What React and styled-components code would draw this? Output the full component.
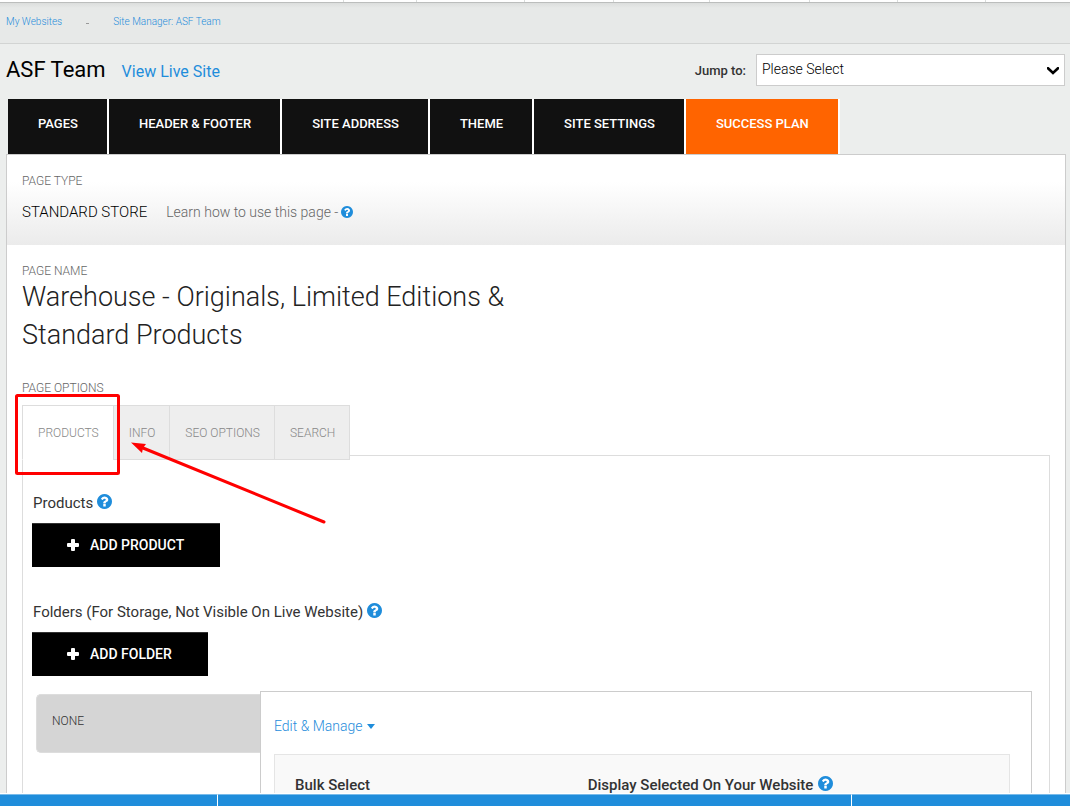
import React from "react";
import styled, { createGlobalStyle } from "styled-components";

const BLUE = "#1f8ddb";

const GlobalStyle = createGlobalStyle`
  *, *::before, *::after { box-sizing: border-box; }
  body {
    margin: 0;
    background: #eceeed;
    color: #333;
    font-family: Roboto, "Liberation Sans", sans-serif;
    font-weight: 300;
  }
  h1, h2, h3, p { margin: 0; font-weight: inherit; }
  a { text-decoration: none; color: ${BLUE}; }
  button, select { font-family: inherit; }
`;

const Shell = styled.div`
  display: flex;
  flex-direction: column;
  height: 100vh;
  overflow: hidden;
`;

const TopStrip = styled.div`
  display: flex;
  justify-content: flex-end;
  flex: none;
  height: 3px;
  background: #fff;
  border-bottom: 1px solid #bcbebd;
`;

const TopCell = styled.span`
  width: ${(p) => p.$w}px;
  border-left: 1px solid #d9dcdb;
`;

const Breadcrumb = styled.nav`
  display: flex;
  align-items: center;
  gap: 24px;
  flex: none;
  height: 41px;
  padding: 0 6px 4px;
  font-size: 10px;
  background: linear-gradient(#dcdedd, #e7e9e8 5px);
  border-bottom: 1px solid #d2d4d3;
`;

const Dot = styled.span`
  width: 3px;
  height: 1px;
  margin-top: 4px;
  background: #999;
`;

const Main = styled.main`
  display: flex;
  flex-direction: column;
  flex: 1;
  min-height: 0;
  overflow: hidden;
`;

const SiteHeader = styled.header`
  display: flex;
  align-items: center;
  flex: none;
  height: 55px;
  padding: 0 5px 4px 6px;
`;

const SiteName = styled.h1`
  font-size: 22px;
  font-weight: 400;
  line-height: 28px;
  color: #000;
`;

const LiveLink = styled.a`
  margin-left: 16px;
  padding-top: 4px;
  font-size: 16px;
  font-weight: 400;
`;

const JumpLabel = styled.label`
  margin-left: auto;
  margin-right: 10px;
  padding-top: 2px;
  font-size: 13px;
  font-weight: 500;
`;

const SelectWrap = styled.div`
  position: relative;
  width: 309px;
  svg {
    position: absolute;
    right: 6px;
    top: 13px;
    pointer-events: none;
  }
`;

const JumpSelect = styled.select`
  display: block;
  width: 100%;
  height: 32px;
  padding: 0 24px 2px 5px;
  appearance: none;
  border: 1px solid #ccc;
  border-radius: 0;
  background: #fff;
  color: #000;
  font-size: 14px;
  font-weight: 300;
`;

const MainNav = styled.nav`
  display: flex;
  flex: none;
  padding-left: 8px;
`;

const NavTab = styled.a`
  height: 55px;
  padding: 0 29px 0 30px;
  border-right: 2px solid #fff;
  background: ${(p) => (p.$accent ? "#ff6400" : "#111")};
  color: #fff;
  font-size: 13px;
  font-weight: 500;
  line-height: 50px;
`;

const Panel = styled.section`
  flex: 1;
  min-height: 0;
  overflow: hidden;
  margin: 0 4px 0 6px;
  border: 1px solid #ccc;
  border-bottom: 0;
  background: #fff;
`;

const TypeBlock = styled.div`
  height: 90px;
  padding: 19px 15px 0;
  background: linear-gradient(#fff 30%, #ebebeb);
`;

const Caption = styled.p`
  color: #666;
  font-size: 12px;
  line-height: 14px;
`;

const TypeRow = styled.div`
  display: flex;
  align-items: center;
  margin-top: 14px;
  line-height: 20px;
`;

const TypeName = styled.h2`
  color: #000;
  font-size: 15px;
`;

const Learn = styled.a`
  display: flex;
  align-items: center;
  gap: 3px;
  margin-left: 19px;
  color: #666;
  font-size: 14px;
`;

const NameBlock = styled.div`
  padding: 19px 15px 0;
`;

const PageTitle = styled.h2`
  width: 50%;
  margin-bottom: 27px;
  color: #222;
  font-size: 27px;
  line-height: 38px;
`;

const OptionsArea = styled.div`
  position: relative;
  margin: 10px 15px 0;
`;

const OptionTabs = styled.nav`
  position: relative;
  z-index: 1;
  display: flex;
  width: max-content;
  border-right: 1px solid #ddd;
`;

const OptionTab = styled.a`
  height: 55px;
  padding: 0 15px;
  padding-right: 14px;
  border: 1px solid #ddd;
  border-right: 0;
  border-bottom-color: ${(p) => (p.$active ? "#fff" : "#ddd")};
  background: ${(p) => (p.$active ? "#fff" : "#eee")};
  color: #888;
  font-size: 12px;
  line-height: 54px;
`;

const OptionsBody = styled.div`
  height: 500px;
  margin-top: -5px;
  padding: 37px 17px 0 9px;
  border: 1px solid #ddd;
`;

const SectionTitle = styled.h3`
  display: flex;
  align-items: center;
  gap: 4px;
  padding-left: 1px;
  font-size: 15px;
  font-weight: 400;
  line-height: 20px;
  svg { margin-bottom: 3px; }
`;

const BlackButton = styled.button`
  display: flex;
  align-items: center;
  gap: 11px;
  height: 44px;
  margin: 10px 0 ${(p) => p.$after}px;
  padding: 0 36px 2px 35px;
  border: 0;
  border-top: 1px solid #333;
  background: #000;
  color: #fff;
  font-size: 14px;
  font-weight: 500;
`;

const FolderArea = styled.div`
  display: flex;
  align-items: flex-start;
  padding-left: 4px;
`;

const FolderItem = styled.a`
  flex: none;
  width: 224px;
  height: 59px;
  margin-top: 3px;
  padding-left: 15px;
  border: 1px solid #ddd;
  border-right: 0;
  border-radius: 5px 0 0 5px;
  background: #d5d5d5;
  color: #333;
  font-size: 12px;
  line-height: 52px;
`;

const FolderContent = styled.div`
  flex: 1;
  height: 240px;
  padding: 24px 21px 0 13px;
  border: 1px solid #ccc;
`;

const ManageButton = styled.button`
  display: flex;
  align-items: center;
  gap: 4px;
  margin-bottom: 18px;
  padding: 0;
  border: 0;
  background: none;
  color: ${BLUE};
  font-size: 14px;
  font-weight: 300;
  line-height: 20px;
`;

const BulkBox = styled.div`
  display: grid;
  grid-template-columns: 41fr 59fr;
  height: 120px;
  padding: 22px 0 0 20px;
  border: 1px solid #e5e5e5;
  background: #f9f9f9;
`;

const BulkTitle = styled.h3`
  display: flex;
  align-items: center;
  gap: 5px;
  height: 16px;
  font-size: 15px;
  font-weight: 500;
  line-height: 16px;
  svg { margin-bottom: 3px; }
`;

const Callout = styled.svg`
  position: absolute;
  z-index: 2;
  left: -7px;
  top: -11px;
  pointer-events: none;
`;

const BottomBar = styled.footer`
  display: flex;
  flex: none;
  height: 13px;
  padding-top: 1px;
  background: #fff;
`;

const BottomCell = styled.span`
  width: ${(p) => p.$w};
  flex: ${(p) => (p.$w ? "none" : 1)};
  border-top: 1px solid #79bbea;
  border-right: ${(p) => (p.$last ? 0 : 1)}px solid #fff;
  background: ${BLUE};
`;

const Help = ({ size = 15 }) => (
  <svg width={size} height={size} viewBox="128 128 1536 1536" fill={BLUE} aria-hidden="true">
    <circle cx="896" cy="896" r="640" fill="#fff" />
    <path d="M1024 1376v-192q0-14-9-23t-23-9h-192q-14 0-23 9t-9 23v192q0 14 9 23t23 9h192q14 0 23-9t9-23zm256-672q0-88-55.5-163t-138.5-116-170-41q-243 0-371 213-15 24 8 42l132 100q7 6 19 6 16 0 25-12 53-68 86-92 34-24 86-24 48 0 85.5 26t37.5 59q0 38-20 61t-68 45q-63 28-115.5 86.5t-52.5 125.5v36q0 14 9 23t23 9h192q14 0 23-9t9-23q0-19 21.5-49.5t54.5-49.5q32-18 49-28.5t46-35 44.5-48 28-60.5 12.5-81zm384 192q0 209-103 385.5t-279.5 279.5-385.5 103-385.5-103-279.5-279.5-103-385.5 103-385.5 279.5-279.5 385.5-103 385.5 103 279.5 279.5 103 385.5z" />
  </svg>
);

const Plus = () => (
  <svg width="12" height="12" viewBox="0 0 12 12" fill="#fff" aria-hidden="true">
    <path d="M5 0h2q1 0 1 1v3h3q1 0 1 1v2q0 1-1 1H8v3q0 1-1 1H5q-1 0-1-1V8H1Q0 8 0 7V5q0-1 1-1h3V1q0-1 1-1z" />
  </svg>
);

const topCells = [73, 108, 89, 96, 100, 88, 88, 85];
const navItems = ["PAGES", "HEADER & FOOTER", "SITE ADDRESS", "THEME", "SITE SETTINGS", "SUCCESS PLAN"];
const optionItems = ["PRODUCTS", "INFO", "SEO OPTIONS", "SEARCH"];

export default function App() {
  return (
    <>
      <GlobalStyle />
      <Shell>
        <TopStrip>
          {topCells.map((w, i) => <TopCell key={i} $w={w} />)}
        </TopStrip>
        <Breadcrumb>
          <a href="#websites">My Websites</a>
          <Dot />
          <a href="#manager">Site Manager: ASF Team</a>
        </Breadcrumb>
        <Main>
          <SiteHeader>
            <SiteName>ASF Team</SiteName>
            <LiveLink href="#live">View Live Site</LiveLink>
            <JumpLabel htmlFor="jump">Jump to:</JumpLabel>
            <SelectWrap>
              <JumpSelect id="jump">
                <option>Please Select</option>
              </JumpSelect>
              <svg width="12" height="8" viewBox="0 0 12 8" fill="none" stroke="#000" strokeWidth="2.6" aria-hidden="true">
                <path d="M1 1.2L6 6L11 1.2" strokeLinecap="round" />
              </svg>
            </SelectWrap>
          </SiteHeader>
          <MainNav>
            {navItems.map((t) => (
              <NavTab key={t} href="#nav" $accent={t === "SUCCESS PLAN"}>{t}</NavTab>
            ))}
          </MainNav>
          <Panel>
            <TypeBlock>
              <Caption>PAGE TYPE</Caption>
              <TypeRow>
                <TypeName>STANDARD STORE</TypeName>
                <Learn href="#learn">Learn how to use this page - <Help size={12} /></Learn>
              </TypeRow>
            </TypeBlock>
            <NameBlock>
              <Caption>PAGE NAME</Caption>
              <PageTitle>Warehouse - Originals, Limited Editions &amp; Standard Products</PageTitle>
              <Caption>PAGE OPTIONS</Caption>
            </NameBlock>
            <OptionsArea>
              <OptionTabs>
                {optionItems.map((t, i) => (
                  <OptionTab key={t} href="#option" $active={i === 0}>{t}</OptionTab>
                ))}
              </OptionTabs>
              <OptionsBody>
                <SectionTitle>Products <Help /></SectionTitle>
                <BlackButton type="button" $after={35}><Plus />ADD PRODUCT</BlackButton>
                <SectionTitle>Folders (For Storage, Not Visible On Live Website) <Help /></SectionTitle>
                <BlackButton type="button" $after={15}><Plus />ADD FOLDER</BlackButton>
                <FolderArea>
                  <FolderItem href="#none">NONE</FolderItem>
                  <FolderContent>
                    <ManageButton type="button">
                      Edit &amp; Manage
                      <svg width="8" height="5" viewBox="0 0 8 5" fill={BLUE} aria-hidden="true"><path d="M0 0h8L4 5z" /></svg>
                    </ManageButton>
                    <BulkBox>
                      <BulkTitle>Bulk Select</BulkTitle>
                      <BulkTitle>Display Selected On Your Website <Help /></BulkTitle>
                    </BulkBox>
                  </FolderContent>
                </FolderArea>
              </OptionsBody>
              <Callout width="312" height="131" viewBox="0 0 312 131" aria-hidden="true">
                <rect x="1.5" y="1.5" width="102" height="78" rx="1" fill="none" stroke="#f00" strokeWidth="3" />
                <path d="M309 128L128 54" stroke="#f00" strokeWidth="3" strokeLinecap="round" />
                <path d="M116 48.5L131 50L128 54L127 59z" fill="#f00" />
              </Callout>
            </OptionsArea>
          </Panel>
        </Main>
        <BottomBar>
          <BottomCell $w="218px" />
          <BottomCell />
          <BottomCell $w="218px" $last />
        </BottomBar>
      </Shell>
    </>
  );
}
